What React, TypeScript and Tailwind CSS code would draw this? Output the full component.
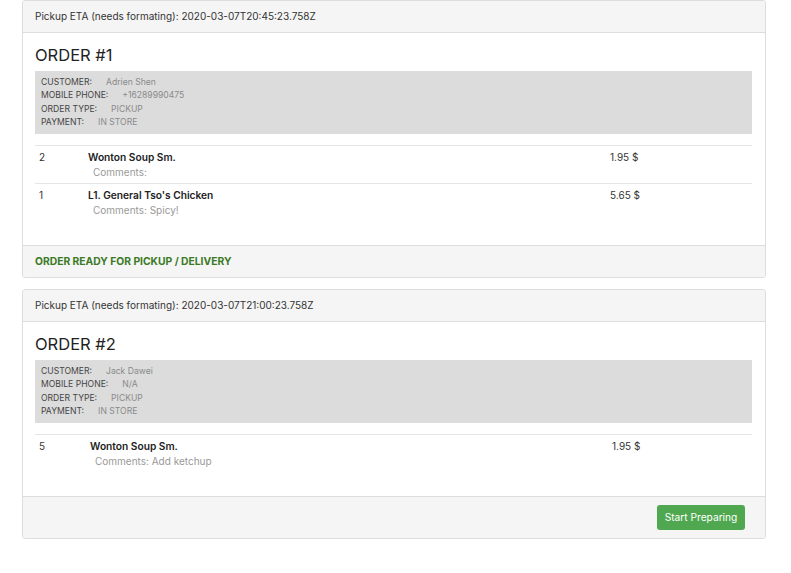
import React from "react";

type Item = { qty: number; name: string; comment: string; price: string };
type Order = {
  eta: string;
  num: number;
  customer: string;
  phone: string;
  items: Item[];
  ready: boolean;
  qtyW: string;
  priceW: string;
};

const orders: Order[] = [
  {
    eta: "2020-03-07T20:45:23.758Z",
    num: 1,
    customer: "Adrien Shen",
    phone: "+16289990475",
    items: [
      { qty: 2, name: "Wonton Soup Sm.", comment: "Comments:", price: "1.95 $" },
      { qty: 1, name: "L1. General Tso's Chicken", comment: "Comments: Spicy!", price: "5.65 $" },
    ],
    ready: true,
    qtyW: "w-[49px]",
    priceW: "w-[138px]",
  },
  {
    eta: "2020-03-07T21:00:23.758Z",
    num: 2,
    customer: "Jack Dawei",
    phone: "N/A",
    items: [{ qty: 5, name: "Wonton Soup Sm.", comment: "Comments: Add ketchup", price: "1.95 $" }],
    ready: false,
    qtyW: "w-[51px]",
    priceW: "w-[136px]",
  },
];

function Info({ label, value }: { label: string; value: string }) {
  return (
    <div className="flex h-[13.4px] items-center">
      <span className="text-[#444]">{label}</span>
      <span className="ml-[14px] text-[#8a8a8a]">{value}</span>
    </div>
  );
}

function OrderPanel({ o }: { o: Order }) {
  return (
    <div className="mb-[11px] overflow-hidden rounded-[3px] border border-[#dddddd] bg-white">
      <div className="flex h-[32px] items-center border-b border-[#dddddd] bg-[#f5f5f5] px-[12px] text-[10px] text-[#333]">
        Pickup ETA (needs formating): {o.eta}
      </div>
      <div className="pl-[12px] pr-[13px] pt-[10px] pb-[15px]">
        <div className="mb-[4px] text-[16.5px] leading-[24px] text-[#222]">ORDER #{o.num}</div>
        <div className="flex h-[63px] flex-col justify-center bg-[#dcdcdc] px-[6px] text-[8.6px]">
          <Info label="CUSTOMER:" value={o.customer} />
          <Info label="MOBILE PHONE:" value={o.phone} />
          <Info label="ORDER TYPE:" value="PICKUP" />
          <Info label="PAYMENT:" value="IN STORE" />
        </div>
        <div className="mt-[11px] border-t border-[#e5e5e5]">
          {o.items.map((it, i) => (
            <div
              key={i}
              className={`flex px-[4px] pt-[4px] pb-[3px] text-[10px] text-[#333] ${
                i < o.items.length - 1 ? "border-b border-[#e5e5e5]" : ""
              }`}
            >
              <div className={`${o.qtyW} shrink-0 leading-[14px]`}>{it.qty}</div>
              <div className="flex-1">
                <div className="text-[10.2px] font-semibold leading-[14px] text-[#222]">{it.name}</div>
                <div className="ml-[5px] leading-[16px] text-[#999]">{it.comment}</div>
              </div>
              <div className={`${o.priceW} shrink-0 leading-[14px]`}>{it.price}</div>
            </div>
          ))}
          <div className="h-[9px]" />
        </div>
      </div>
      {o.ready ? (
        <div className="flex h-[32px] items-center border-t border-[#dddddd] bg-[#f5f5f5] px-[12px] text-[10.3px] font-bold text-[#3b7a24]">
          ORDER READY FOR PICKUP / DELIVERY
        </div>
      ) : (
        <div className="flex h-[42px] items-center justify-end border-t border-[#dddddd] bg-[#f5f5f5] px-[20px]">
          <button className="h-[25px] w-[88px] rounded-[3px] bg-[#4fa84f] text-[10.2px] text-white">
            Start Preparing
          </button>
        </div>
      )}
    </div>
  );
}

export default function App() {
  return (
    <div
      className="min-h-[573px] w-[791px] bg-white px-[22px]"
      style={{ fontFamily: "Inter, 'Helvetica Neue', Arial, sans-serif" }}
    >
      <div className="w-[744px]">
        {orders.map((o) => (
          <OrderPanel key={o.num} o={o} />
        ))}
      </div>
    </div>
  );
}
